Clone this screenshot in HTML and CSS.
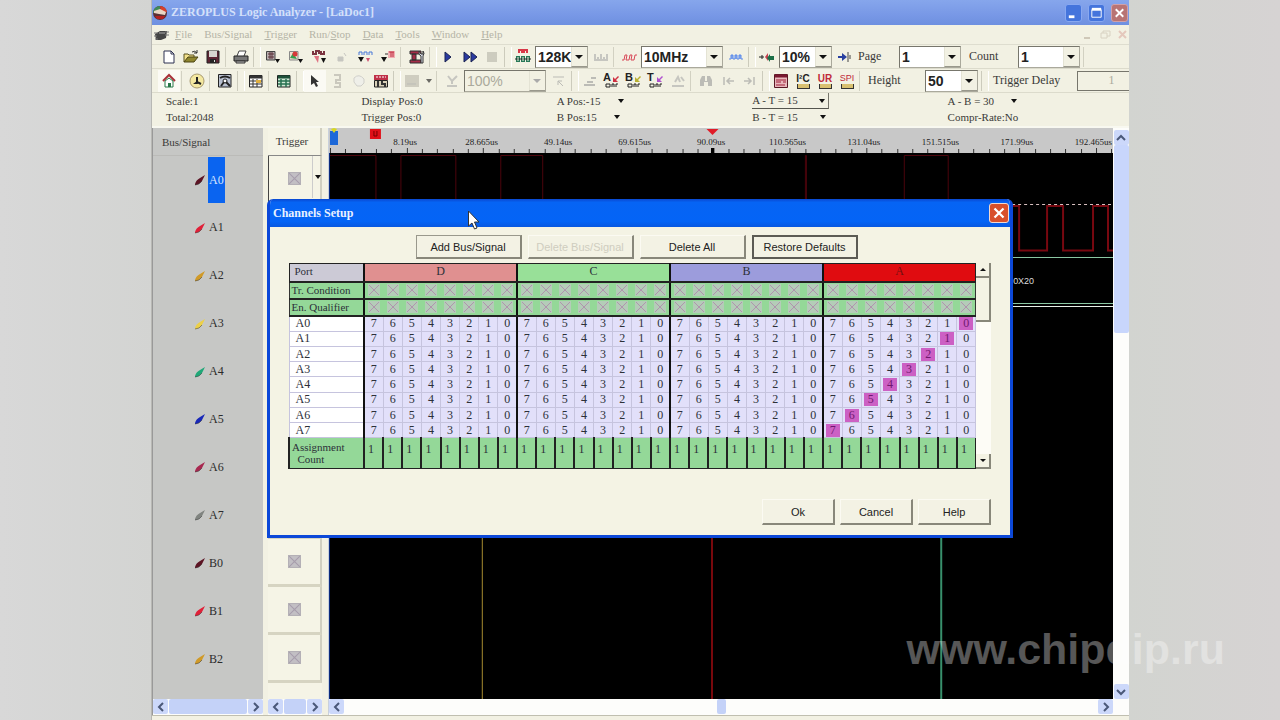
FILE: index.html
```html
<!DOCTYPE html>
<html lang="en">
<head>
<meta charset="utf-8">
<title>ZEROPLUS Logic Analyzer - [LaDoc1]</title>
<link rel="stylesheet" href="styles.css">
</head>
<body>
<svg class="defs" aria-hidden="true">
  <symbol id="cross" viewBox="0 0 12 12"><rect width="12" height="12" fill="#c2bfc4"/><path d="M1 1L11 11M11 1L1 11" stroke="#a79dac" fill="none"/><rect x=".5" y=".5" width="11" height="11" fill="none" stroke="#b4b0b6"/></symbol>
  <symbol id="cond" viewBox="0 0 12 12"><rect width="12" height="12" fill="#b4ccb8"/><path d="M1 1L11 11M11 1L1 11" stroke="#b094ae" fill="none"/></symbol>
  <symbol id="probe" viewBox="0 0 12 12"><path d="M1 10Q2 6 6 4L11 1L8 7Q5 11 1 11Z" fill="currentColor"/><path d="M1 11L5 10L8 7" stroke="#333" stroke-opacity=".5" fill="none"/></symbol>
  <symbol id="left" viewBox="0 0 10 10"><path d="M7 1L3 5L7 9" fill="none" stroke="#4a5878" stroke-width="2"/></symbol>
  <symbol id="right" viewBox="0 0 10 10"><path d="M3 1L7 5L3 9" fill="none" stroke="#4a5878" stroke-width="2"/></symbol>
  <symbol id="up" viewBox="0 0 10 10"><path d="M1 7L5 3L9 7" fill="none" stroke="#4a5878" stroke-width="2"/></symbol>
  <symbol id="down" viewBox="0 0 10 10"><path d="M1 3L5 7L9 3" fill="none" stroke="#4a5878" stroke-width="2"/></symbol>
</svg>
<main class="app">
  <header class="titlebar">
    <svg class="ico" viewBox="0 0 16 16"><circle cx="8" cy="8" r="7" fill="#5b2f33"/><path d="M1 8A7 7 0 0 1 8 1L9 7Z" fill="#3f8a5a"/><path d="M8 1A7 7 0 0 1 15 7L9 7Z" fill="#d8402c"/><path d="M2 6L8 4L14 7L13 10L7 9L2 8Z" fill="#e9d6c4"/><path d="M3 11L13 11L11 14L5 14Z" fill="#b32020"/></svg>
    <h1>ZEROPLUS Logic Analyzer - [LaDoc1]</h1>
    <button class="wb" aria-label="Minimize"><svg viewBox="0 0 16 16"><path d="M3 12H9" stroke="#fff" stroke-width="3"/></svg></button>
    <button class="wb" aria-label="Maximize"><svg viewBox="0 0 16 16"><path d="M3 4.500H13V12.500H3Z" stroke="#fff" fill="none"/><path d="M3 4H13" stroke="#fff" stroke-width="3"/></svg></button>
    <button class="wb close-dim" aria-label="Close"><svg viewBox="0 0 16 16"><path d="M4 4L12 12M12 4L4 12" stroke="#fff" stroke-width="2"/></svg></button>
  </header>
  <nav class="menubar">
    <svg class="ico" viewBox="0 0 16 16"><path d="M2 7L7 4H14L13 11L8 13H3Z" fill="#444"/><path d="M1 6H5M1 9H4M2 12H5M12 5H16M12 8H16" stroke="#777" /><path d="M6 6H12" stroke="#aaa"/></svg>
    <a href="#"><u>F</u>ile</a><a href="#">Bus/Signal</a><a href="#"><u>T</u>rigger</a><a href="#">Run/<u>S</u>top</a><a href="#"><u>D</u>ata</a><a href="#"><u>T</u>ools</a><a href="#"><u>W</u>indow</a><a href="#"><u>H</u>elp</a>
    <svg class="mdi" viewBox="0 0 48 12"><path d="M3 9H9" stroke="#cfc8b8" stroke-width="2"/><path d="M20 4H26V9H20ZM22 4V2H29V7H26" fill="none" stroke="#d8d2c2"/><path d="M38 2L45 9M45 2L38 9" stroke="#e4c8bc" stroke-width="2"/></svg>
  </nav>
  <div class="toolbar">
    <button class="tb" aria-label="New"><svg viewBox="0 0 16 16"><path d="M3 2H10L13 5V14H3Z" fill="#fff" stroke="#2d3050"/><path d="M10 2V5H13" fill="none" stroke="#2d3050"/></svg></button>
    <button class="tb" aria-label="Open"><svg viewBox="0 0 16 16"><path d="M1 13V5H5L6 6H11V8" fill="#f2e08a" stroke="#5a5320"/><path d="M1 13L5 8H15L11 13Z" fill="#8f862e" stroke="#4a4415"/><path d="M9 3Q12 1 14 4M14 1V4H11" fill="none" stroke="#333"/></svg></button>
    <button class="tb" aria-label="Save"><svg viewBox="0 0 16 16"><path d="M2 2H14V14H2Z" fill="#5c2433" stroke="#222"/><path d="M4 2H12V8H4Z" fill="#d7d5d0"/><path d="M5 10H11V14H5Z" fill="#222"/><path d="M9 11H10V13H9Z" fill="#ddd"/></svg></button>
    <i class="sep"></i>
    <button class="tb" aria-label="Print"><svg viewBox="0 0 16 16"><path d="M4 7L6 2H13L11 7" fill="#fff" stroke="#444"/><path d="M1 7H15V12H1Z" fill="#777" stroke="#222"/><path d="M3 12H12V14H3Z" fill="#bbb" stroke="#333"/></svg></button>
    <i class="sep wide"></i>
    <button class="tb mid" aria-label="Sampling setup"><svg viewBox="0 0 16 16"><path d="M1.500 2.500H10V11H1.500Z" fill="#b8aeb0" stroke="#444"/><path d="M3 5H9M3 8H9M5 3V10M7 3V10" stroke="#5a3038"/><path d="M10 10H15L12.500 14Z" fill="#111"/></svg></button>
    <button class="tb mid" aria-label="Channels setup"><svg viewBox="0 0 16 16"><path d="M1.500 2.500H10V11H1.500Z" fill="#f0ded0" stroke="#888"/><path d="M2 9L5 4L9 10Z" fill="#35a050"/><circle cx="7" cy="5" r="2.500" fill="#d83838"/><path d="M10 10H15L12.500 14Z" fill="#111"/></svg></button>
    <button class="tb mid" aria-label="Trigger setup"><svg viewBox="0 0 16 16"><path d="M2 2V5H5V2H8V5M10 2V5H13V2" fill="none" stroke="#7c3440" stroke-width="2"/><path d="M3 7L7 14L8 7Z" fill="#e07080"/><path d="M10 9H15L12.500 14Z" fill="#111"/></svg></button>
    <button class="tb mid dim" aria-label="Trigger option"><svg viewBox="0 0 16 16"><path d="M4 8H9V12H4ZM10 4L12 7" fill="#aaa" stroke="#aaa"/></svg></button>
    <button class="tb mid" aria-label="Trigger mark"><svg viewBox="0 0 16 16"><path d="M2 6V3H5V6M7 6V3H10V6M12 6V3H15V6" fill="none" stroke="#4878d8"/><path d="M1 8H7L4 13Z" fill="#111"/><path d="M9 9H13L11 13Z" fill="#d05070"/></svg></button>
    <button class="tb mid" aria-label="Width trigger"><svg viewBox="0 0 16 16"><path d="M8 2H15V9H8Z" fill="#f0b0b4"/><path d="M9 3H14M11 3V8M13 3V8" stroke="#c02c40"/><path d="M1 8H7L4 13Z" fill="#111"/><path d="M5 5H8" stroke="#333"/></svg></button>
    <i class="sep"></i>
    <button class="tb mid" aria-label="Bus tools"><svg viewBox="0 0 16 16"><path d="M1 2H12V5H1ZM1 11H12V14H1ZM3 5H7V11H3Z" fill="#a52c48" stroke="#333"/><path d="M10 2Q9 6 12 7V14H14V7Q16 4 14 2V5H12Z" fill="#dfe3ee" stroke="#333"/></svg></button>
    <i class="sep wide"></i>
    <button class="tb" aria-label="Run"><svg viewBox="0 0 16 16"><path d="M5 3L11 8L5 13Z" fill="#2a3aa0" stroke="#1a2350"/></svg></button>
    <button class="tb" aria-label="Repeat run"><svg viewBox="0 0 16 16"><path d="M2 3L8 8L2 13ZM9 3L15 8L9 13Z" fill="#2a3aa0" stroke="#1a2350"/></svg></button>
    <button class="tb dim" aria-label="Stop"><svg viewBox="0 0 16 16"><path d="M3 3H13V13H3Z" fill="#b5b4a8"/></svg></button>
    <i class="sep wide"></i>
    <button class="tb" aria-label="RAM size"><svg viewBox="0 0 16 16"><path d="M4 4V1H7V4M9 4V1H12V4" fill="none" stroke="#d83848" stroke-width="2"/><path d="M1 7H5V13H1ZM6 7H10V13H6ZM11 7H15V13H11Z" fill="#287858"/><path d="M0 10H16" stroke="#222"/><path d="M3 8V12M8 8V12M13 8V12" stroke="#f0efe0"/></svg></button>
    <label class="combo"><select aria-label="RAM size"><option>128K</option></select></label>
    <button class="tb dim" aria-label="Memory"><svg viewBox="0 0 16 16"><path d="M2 5V12M5 8V12M8 5V12M11 8V12M14 5V12M1 11H15" stroke="#aaa" stroke-width="2"/></svg></button>
    <i class="sep"></i>
    <button class="tb" aria-label="Frequency"><svg viewBox="0 0 16 16"><path d="M1 11H3L4 6H6L5 11H8L9 6H11L10 11H13L14 6H16" fill="none" stroke="#d84858"/></svg></button>
    <label class="combo long"><select aria-label="Frequency"><option>10MHz</option></select></label>
    <button class="tb" aria-label="External clock"><svg viewBox="0 0 16 16"><path d="M1 10H3V6H5V10H7V6H9V10H11V6H13V10H15" fill="#90b0f0" stroke="#5888e8"/></svg></button>
    <i class="sep wide"></i>
    <button class="tb" aria-label="Trigger position"><svg viewBox="0 0 16 16"><path d="M0 8H5M3 6V10" stroke="#222"/><path d="M6 8L9 4V12Z" fill="#c84050"/><path d="M8 9L11 5V7H15V11H11V13Z" fill="#1c7048"/></svg></button>
    <label class="combo"><select aria-label="Trigger position"><option>10%</option></select></label>
    <button class="tb" aria-label="Trigger page"><svg viewBox="0 0 16 16"><path d="M1 7H5V4L10 8L5 12V9H1Z" fill="#2840a0"/><path d="M11 3V13M13 6V10" stroke="#444"/></svg></button>
    <label class="lab page" for="page">Page</label>
    <span class="combo count"><select id="page"><option>1</option></select></span>
    <label class="lab cnt" for="count">Count</label>
    <span class="combo count"><select id="count"><option>1</option></select></span>
    <i class="sep"></i>
  </div>
  <div class="toolbar">
    <button class="tb on" aria-label="Home"><svg viewBox="0 0 16 16"><path d="M2 8L8 2L14 8" fill="none" stroke="#a83038" stroke-width="2"/><path d="M4 8V14H12V8L8 5Z" fill="#fff" stroke="#287848"/><path d="M7 10H10V14H7Z" fill="#287848"/></svg></button>
    <i class="sep"></i>
    <button class="tb" aria-label="Statistics"><svg viewBox="0 0 16 16"><circle cx="8" cy="8" r="7" fill="#f4e8a0" stroke="#a89a70"/><path d="M8 4V9L12 11" stroke="#222" stroke-width="2" fill="none"/><path d="M8 8L4 11H9Z" fill="#222"/></svg></button>
    <i class="sep"></i>
    <button class="tb" aria-label="Navigator"><svg viewBox="0 0 16 16"><path d="M1.500 1.500H14V14H1.500Z" fill="#b8c0d0" stroke="#222"/><path d="M3 5Q8 2 13 5" fill="none" stroke="#222" stroke-width="2"/><circle cx="8" cy="8" r="2" fill="#fff" stroke="#222"/><path d="M4 13L7 9M13 13L9 9" stroke="#222" stroke-width="2"/></svg></button>
    <i class="sep wide"></i>
    <button class="tb" aria-label="Waveform view"><svg viewBox="0 0 16 16"><path d="M1.500 2.500H14V14H1.500Z" fill="#fff" stroke="#222"/><path d="M2 4H14" stroke="#333" stroke-width="3"/><path d="M2 8H14M2 11H14M5 6V14M9 6V14" stroke="#333"/><path d="M8 7H13V10H8Z" fill="#e0b040"/></svg></button>
    <i class="sep"></i>
    <button class="tb" aria-label="List view"><svg viewBox="0 0 16 16"><path d="M1.500 2.500H14V14H1.500Z" fill="#cfe8d4" stroke="#222"/><path d="M2 4H14" stroke="#1d5038" stroke-width="3"/><path d="M2 8H14M2 11H14M5 6V14M10 6V14" stroke="#287050" stroke-width="1.500"/></svg></button>
    <i class="sep wide"></i>
    <button class="tb on" aria-label="Pointer"><svg viewBox="0 0 16 16"><path d="M4 2V12L7 10L9 14L11 13L9 9H12Z" fill="#333"/></svg></button>
    <button class="tb dim" aria-label="Zoom"><svg viewBox="0 0 16 16"><path d="M5 2H11V7H7V10H11V14H5" fill="none" stroke="#b0aea4" stroke-width="2"/></svg></button>
    <button class="tb dim" aria-label="Hand"><svg viewBox="0 0 16 16"><path d="M3 9V5Q8 0 13 6V10L10 13H6Z" fill="#eee" stroke="#bbb"/></svg></button>
    <button class="tb" aria-label="Normal"><svg viewBox="0 0 16 16"><path d="M1 2H15V7H1Z" fill="#c03048"/><path d="M3 4H13" stroke="#fff" stroke-dasharray="2 1"/><path d="M1.500 7.500H14.500V14H1.500Z" fill="#d8d0b8" stroke="#222"/><path d="M5 8V14M9 8V11H12V14" fill="none" stroke="#333" stroke-width="2"/></svg></button>
    <i class="sep wide"></i>
    <button class="tb dim" aria-label="Color"><svg viewBox="0 0 16 16"><path d="M1 2H15V14H1Z" fill="#b8b6aa"/><path d="M3 11H12" stroke="#999"/></svg></button>
    <button class="drop dim" aria-label="Color options"></button>
    <i class="sep"></i>
    <button class="tb dim" aria-label="Zoom out"><svg viewBox="0 0 16 16"><path d="M4 3L8 8L13 3M8 8V11M3 13H13" fill="none" stroke="#aaa" stroke-width="2"/></svg></button>
    <label class="combo long off"><select aria-label="Zoom" disabled><option>100%</option></select></label>
    <button class="tb dim" aria-label="Data zoom"><svg viewBox="0 0 16 16"><path d="M2 4H13M7 8L12 13M7 8V12M7 8H11" stroke="#999"/></svg></button>
    <i class="sep wide"></i>
    <button class="tb dim" aria-label="Add bar"><svg viewBox="0 0 16 16"><path d="M2 12H13M5 9H11M9 5H14" stroke="#999" stroke-width="2"/></svg></button>
    <button class="tb bar" aria-label="A bar"><b>A</b><svg viewBox="0 0 16 16"><path d="M9 9V4L11 6L14 3L15 4L12 7L14 9Z" fill="#d03040"/><path d="M2 11H6V14H2ZM8 14V11H10V14M12 14V11H14" fill="none" stroke="#222"/></svg></button>
    <button class="tb bar" aria-label="B bar"><b>B</b><svg viewBox="0 0 16 16"><path d="M9 9V4L11 6L14 3L15 4L12 7L14 9Z" fill="#b8b030"/><path d="M2 11H6V14H2ZM8 14V11H10V14M12 14V11H14" fill="none" stroke="#222"/></svg></button>
    <button class="tb bar" aria-label="T bar"><b>T</b><svg viewBox="0 0 16 16"><path d="M9 9V4L11 6L14 3L15 4L12 7L14 9Z" fill="#b050d0"/><path d="M2 11H6V14H2ZM8 14V11H10V14M12 14V11H14" fill="none" stroke="#222"/></svg></button>
    <button class="tb dim" aria-label="Delete bar"><svg viewBox="0 0 16 16"><path d="M2 13H14M5 9L8 4L10 9M11 4L14 8" fill="none" stroke="#aaa" stroke-width="2"/></svg></button>
    <i class="sep"></i>
    <button class="tb dim" aria-label="Find"><svg viewBox="0 0 16 16"><path d="M2 13V7L4 3H7V8H9V3H12L14 7V13H10V9H6V13Z" fill="#999"/></svg></button>
    <button class="tb dim" aria-label="Previous edge"><svg viewBox="0 0 16 16"><path d="M4 4V12M14 8H7M10 5L7 8L10 11" fill="none" stroke="#999" stroke-width="1.500"/></svg></button>
    <button class="tb dim" aria-label="Next edge"><svg viewBox="0 0 16 16"><path d="M12 4V12M2 8H9M6 5L9 8L6 11" fill="none" stroke="#999" stroke-width="1.500"/></svg></button>
    <i class="sep wide"></i>
    <button class="tb" aria-label="Bus property"><svg viewBox="0 0 16 16"><path d="M1.500 1.500H14.500V14.500H1.500Z" fill="#e8b8bc" stroke="#5a1824"/><path d="M2 3H14" stroke="#7a1830" stroke-width="3"/><path d="M3 7H13M3 9H8M10 9H13M3 12H12" stroke="#a02038"/></svg></button>
    <button class="tb bus ink" aria-label="I2C bus"><b>I²C</b><i></i></button>
    <button class="tb bus" aria-label="UART bus"><b>UR</b><i></i></button>
    <button class="tb bus thin" aria-label="SPI bus"><b>SPI</b><i></i></button>
    <i class="sep"></i>
    <label class="lab height" for="height">Height</label>
    <span class="combo"><select id="height"><option>50</option></select></span>
    <i class="sep wide"></i>
    <label class="lab delay" for="delay">Trigger Delay</label>
    <input id="delay" class="delay-box" value="1" disabled>
  </div>
  <section class="info">
    <div><p>Scale:1</p><p>Total:2048</p></div>
    <div><p>Display Pos:0</p><p>Trigger Pos:0</p></div>
    <div><p>A Pos:-15<button class="drop" aria-label="A position"></button></p><p>B Pos:15<button class="drop" aria-label="B position"></button></p></div>
    <div><p class="boxed">A - T = 15<button class="drop" aria-label="A minus T"></button></p><p class="pair">B - T = 15<button class="drop" aria-label="B minus T"></button></p></div>
    <div><p>A - B = 30<button class="drop" aria-label="A minus B"></button></p><p>Compr-Rate:No</p></div>
  </section>
  <section class="work">
    <div class="signals">
      <h2>Bus/Signal</h2>
      <ul class="rows">
        <li class="p0"><svg><use href="#probe"/></svg><span class="sel">A0</span></li>
        <li class="p1"><svg><use href="#probe"/></svg><span>A1</span></li>
        <li class="p2"><svg><use href="#probe"/></svg><span>A2</span></li>
        <li class="p3"><svg><use href="#probe"/></svg><span>A3</span></li>
        <li class="p4"><svg><use href="#probe"/></svg><span>A4</span></li>
        <li class="p5"><svg><use href="#probe"/></svg><span>A5</span></li>
        <li class="p6"><svg><use href="#probe"/></svg><span>A6</span></li>
        <li class="p7"><svg><use href="#probe"/></svg><span>A7</span></li>
        <li class="p0"><svg><use href="#probe"/></svg><span>B0</span></li>
        <li class="p1"><svg><use href="#probe"/></svg><span>B1</span></li>
        <li class="p2"><svg><use href="#probe"/></svg><span>B2</span></li>
      </ul>
      <div class="hscroll"><button aria-label="Scroll left"><svg><use href="#left"/></svg></button><i class="thumb"></i><button aria-label="Scroll right"><svg><use href="#right"/></svg></button></div>
    </div>
    <div class="triggers">
      <h2>Trigger</h2>
      <ul class="rows">
        <li class="cur"><svg><use href="#cross"/></svg><button class="drop" aria-label="Trigger condition"></button></li>
        <li></li><li></li><li></li><li></li><li></li><li></li><li></li>
        <li><svg><use href="#cross"/></svg></li><li><svg><use href="#cross"/></svg></li><li><svg><use href="#cross"/></svg></li>
      </ul>
      <div class="hscroll"><button aria-label="Scroll left"><svg><use href="#left"/></svg></button><i class="thumb"></i><button aria-label="Scroll right"><svg><use href="#right"/></svg></button></div>
    </div>
    <div class="waves">
      <div class="ruler">
        <svg class="ticks" viewBox="0 0 785 25" preserveAspectRatio="none"><path id="ticks" stroke="#333" d=""/><path d="M384 20V25" stroke="#000" stroke-width="3"/><path d="M378 1H390L384 7Z" fill="#e01c28"/><path d="M41 1H52V11H41Z" fill="#e01018"/><path d="M45 3V8H48V3" fill="none" stroke="#700"/><path d="M1 3H9V17H1Z" fill="#1c68d8"/><path d="M2 1L5 0L8 1L5 5Z" fill="#d8d820"/></svg>
        <span>8.19us</span><span>28.665us</span><span>49.14us</span><span>69.615us</span><span>90.09us</span><span>110.565us</span><span>131.04us</span><span>151.515us</span><span>171.99us</span><span>192.465us</span>
      </div>
      <svg class="plot" viewBox="0 0 785 546" preserveAspectRatio="none">
        <rect width="785" height="546" fill="#000"/>
        <path d="M1 2.500H47V50H72V2.500H127V50H172V2.500H214V50H477V2.500H478V50H576V2.500H620V50" fill="none" stroke="#4c040c"/>
        <path d="M684 51.500H785" stroke="#d8c0c0" stroke-dasharray="3 3"/>
        <path d="M684 53H691V97.500H719V53H735V97.500H765V53H780V97.500H785" fill="none" stroke="#780810" stroke-width="2"/>
        <path d="M684 104.500H785M684 150.500H785" stroke="#8cc8a4"/><path d="M684 153.500H785" stroke="#e8f0e8"/>
        <path d="M153.500 380V546" stroke="#a88c30"/><path d="M383.500 380V546" stroke="#78080c" stroke-width="2"/><path d="M613 380V546" stroke="#38906c" stroke-width="2"/>
        <path d="M.5 0V546" stroke="#0c2c80"/>
        <text x="685" y="131" class="bus-value">0X20</text>
      </svg>
      <div class="hscroll"><button aria-label="Scroll left"><svg><use href="#left"/></svg></button><i class="thumb"></i><button aria-label="Scroll right"><svg><use href="#right"/></svg></button></div>
    </div>
    <div class="vscroll"><button aria-label="Scroll up"><svg><use href="#up"/></svg></button><i class="thumb"></i><button aria-label="Scroll down"><svg><use href="#down"/></svg></button></div>
  </section>
  <footer class="status"></footer>
</main>
<section class="dialog" role="dialog" aria-labelledby="dlg">
  <header><h2 id="dlg">Channels Setup</h2><button class="x" aria-label="Close"><svg viewBox="0 0 16 16"><path d="M4 4L12 12M12 4L4 12" stroke="#fff" stroke-width="2"/></svg></button></header>
  <div class="body">
    <div class="actions"><button class="btn">Add Bus/Signal</button><button class="btn" disabled>Delete Bus/Signal</button><button class="btn">Delete All</button><button class="btn default">Restore Defaults</button></div>
    <div class="sheet">
      <table>
        <colgroup><col class="name"><col span="32"></colgroup>
        <thead><tr><th>Port</th><th class="pd" colspan="8">D</th><th class="pc" colspan="8">C</th><th class="pb" colspan="8">B</th><th class="pa" colspan="8">A</th></tr></thead>
        <tbody id="channels"></tbody>
      </table>
      <div class="sbar"><button class="u" aria-label="Scroll up"></button><i></i><button class="d" aria-label="Scroll down"></button></div>
    </div>
    <div class="confirm"><button class="btn">Ok</button><button class="btn">Cancel</button><button class="btn">Help</button></div>
  </div>
</section>
<svg class="cursor" viewBox="0 0 12 20"><path d="M1 1V16L4.500 13L7 19L9.500 18L7 12H11.500Z" fill="#fff" stroke="#333"/></svg>
<div class="watermark">www.chipdip.ru</div>
<script src="script.js"></script>
</body>
</html>
```
FILE: styles.css
```css
* { box-sizing: border-box; }
body { margin: 0; height: 100vh; overflow: hidden; position: relative; padding: 0 151px; background: linear-gradient(90deg, #d8d8d8, #d3d4d2 12%, #d2d4d0 88%, #d6d3d3); font: 11px/15px "Liberation Serif", serif; color: #3a3a38; }
h1, h2, p, ul { margin: 0; padding: 0; font-size: inherit; font-weight: normal; list-style: none; }
button { padding: 0; border: 0; background: none; color: inherit; font: inherit; }
.defs { position: absolute; width: 0; height: 0; }
.app { height: 100%; display: flex; flex-direction: column; background: #f2f1e3; border-left: 1px solid #b8b8b4; overflow: hidden; }
.ico { width: 16px; height: 16px; flex: none; }

.titlebar { height: 25px; flex: none; display: flex; align-items: center; gap: 2px; background: linear-gradient(#86a6ec, #7898e6 60%, #6e90e0); color: #d4e0fa; }
.titlebar h1 { flex: 1; font-size: 12px; font-weight: bold; padding-left: 1px; }
.wb { width: 17px; height: 18px; margin-right: 4px; border: 1px solid #88a8f0; border-radius: 3px; background: #4474dc; }
.wb svg { display: block; width: 15px; height: 16px; }
.close-dim { background: #b87474; border-color: #d0a0a8; margin-right: 1px; }

.menubar { height: 20px; flex: none; display: flex; align-items: center; gap: 12px; padding-left: 1px; color: #b5b4a6; border-bottom: 1px solid #deddcf; }
.menubar .ico { margin-right: -6px; }
.menubar a { color: inherit; text-decoration: none; }
.mdi { width: 48px; height: 12px; margin-left: auto; }

.toolbar { height: 24px; flex: none; display: flex; align-items: center; padding-left: 6px; border-bottom: 1px solid #dcdbcc; overflow: hidden; }
.tb { width: 22px; height: 22px; flex: none; position: relative; display: flex; align-items: center; justify-content: center; }
.tb svg { width: 16px; height: 16px; }
.mid { width: 23px; }
.dim { opacity: .6; }
.on { background: #fbfaf4; }
.sep { width: 5px; height: 20px; flex: none; border-left: 1px solid #d2d1c2; margin-left: 1px; }
.sep.wide { width: 8px; border-right: 1px solid #fff; border-left-color: #cccbbc; }
.bar b { position: absolute; left: 2px; top: 2px; font: bold 11px/11px "Liberation Sans", sans-serif; color: #222; }
.bus { flex-direction: column; color: #c02838; }
.bus b { font: bold 10px/11px "Liberation Sans", sans-serif; }
.bus i { width: 13px; height: 5px; border: 1px solid #333; border-top: 0; background: #d8c070; }
.ink b { color: #222; }
.thin b { font-weight: normal; font-size: 9px; }
.combo { position: relative; flex: none; width: 53px; height: 22px; margin: 0 2px 0 1px; background: #fff; border: 1px solid #77766c; border-right-color: #aaa99c; border-bottom-color: #aaa99c; }
.combo::after { content: ""; position: absolute; right: 4px; top: 8px; border: 4px solid transparent; border-top-color: #111; border-bottom: 0; }
.combo::before { content: ""; position: absolute; right: 0; top: 0; bottom: 0; width: 15px; background: #f2f1e3; border-left: 1px solid #e4e3d4; border-bottom: 1px solid #99988c; }
.combo select { appearance: none; width: 100%; height: 100%; border: 0; padding: 0 2px; background: none; font: bold 14px/20px "Liberation Sans", sans-serif; color: #222; }
.combo.long { width: 82px; }
.combo.count { width: 62px; }
.off { background: #f2f1e3; }
.off select { font-weight: normal; color: #aaa99c; opacity: 1; }
.off::after { border-top-color: #aaa; }
.lab { flex: none; font-size: 12px; }
.page { width: 42px; padding-left: 2px; }
.cnt { width: 54px; padding-left: 6px; }
.height { width: 60px; padding-left: 4px; }
.delay { width: 88px; padding-left: 4px; }
.delay-box { flex: 1; min-width: 0; height: 20px; border: 1px solid #77766c; border-right: 0; background: #f2f1e3; text-align: center; color: #aaa99c; font: 12px "Liberation Serif", serif; padding: 0 0 0 16px; }
.drop { width: 12px; height: 12px; display: inline-flex; align-items: center; justify-content: center; }
.drop::after { content: ""; border: 3px solid transparent; border-top: 4px solid #111; border-bottom: 0; }

.info { height: 35px; flex: none; display: grid; grid-template-columns: repeat(5, 20%); align-items: start; font-size: 11px; border-bottom: 2px solid #f8f8f0; }
.info div { padding-left: 14px; }
.info p { display: flex; align-items: center; gap: 14px; height: 16px; width: max-content; }
.info .boxed, .info .pair { width: 77px; justify-content: space-between; gap: 0; }
.info .boxed { border-bottom: 1px solid #55554e; border-right: 1px solid #77766c; }

.work { flex: 1; min-height: 0; display: flex; }
.signals, .triggers, .waves { display: flex; flex-direction: column; min-width: 0; }
.signals { width: 111px; margin-right: 5px; background: #c6c7c5; border-left: 1px solid #999; }
.signals h2 { height: 28px; flex: none; padding: 7px 0 0 9px; border-bottom: 1px solid #bbbbb8; }
.rows { flex: 1; min-height: 0; display: flex; flex-direction: column; padding-bottom: 16px; }
.rows li { flex: 1; min-height: 0; display: flex; align-items: center; }
.signals li { padding-left: 41px; gap: 2px; font-size: 12px; color: #2c2c2c; }
.signals li svg { width: 12px; height: 12px; color: var(--c); }
.signals li span { padding: 0 1px; }
.signals li .sel { background: #0a64f0; color: #d8e6ff; line-height: 46px; }
.p0 { --c: #5c1424; }
.p1 { --c: #e02038; }
.p2 { --c: #d09a28; }
.p3 { --c: #ecd048; }
.p4 { --c: #20a878; }
.p5 { --c: #1828b8; }
.p6 { --c: #a82850; }
.p7 { --c: #808480; }
.triggers { width: 54px; margin-right: 6px; background: #f5f4e6; }
.triggers h2 { height: 28px; flex: none; padding-top: 6px; text-align: center; border-right: 2px solid #d0cfc0; border-bottom: 1px solid #888; padding-right: 4px; }
.triggers li { justify-content: center; border-bottom: 3px solid #d6d4c2; border-right: 2px solid #d0cfc0; position: relative; }
.triggers li svg { width: 13px; height: 13px; }
.triggers li.cur { border-left: 1px solid #444; }
.triggers .drop { position: absolute; right: -2px; top: 0; bottom: 3px; height: auto; width: 10px; border-left: 1px solid #ccc; }
.waves { flex: 1; border-left: 1px solid #c8d0dc; }
.ruler { height: 25px; flex: none; position: relative; display: flex; padding-left: 38px; background: #c8c8c8; overflow: hidden; font-size: 9px; color: #222; }
.ruler span { flex: 0 0 10.25%; text-align: center; padding-top: 7px; line-height: 14px; }
.ticks { position: absolute; left: 0; top: 0; width: 100%; height: 100%; }
.plot { flex: 1; min-height: 0; width: 100%; display: block; }
.bus-value { font: 9px "Liberation Sans", sans-serif; fill: #ddd; }
.hscroll { height: 16px; flex: none; display: flex; background: #fdfdfb; }
.hscroll button, .vscroll button { width: 15px; height: 15px; flex: none; display: flex; align-items: center; justify-content: center; background: #ccd8fa; border-radius: 2px; }
.hscroll button svg, .vscroll button svg { width: 10px; height: 10px; }
.hscroll .thumb { flex: 1; margin: 0 1px 1px; background: #c4d2f8; border-radius: 2px; }
.waves .hscroll { justify-content: space-between; }
.waves .thumb { flex: 0 0 9px; }
.vscroll { width: 16px; display: flex; flex-direction: column; align-items: center; background: #fdfdfb; padding: 2px 0 16px; }
.vscroll .thumb { width: 15px; height: 33%; background: #c8d6fc; border-radius: 2px; margin-bottom: auto; }
.status { height: 5px; flex: none; border-top: 1px solid #c0bfb0; }

.dialog { position: absolute; left: 267px; right: 267px; top: 199px; display: flex; flex-direction: column; border: 3px solid #0c48d8; border-top: 0; border-radius: 6px 6px 0 0; background: #f4f3e4; overflow: hidden; }
.dialog header { height: 28px; display: flex; align-items: center; justify-content: space-between; padding: 0 1px 0 3px; background: linear-gradient(#0a48d0, #0664f4 12%, #0464f6 80%, #0858e0); color: #eaf2ff; font-size: 12px; font-weight: bold; }
.dialog h2 { font-weight: bold; }
.x { width: 20px; height: 20px; border: 1px solid #f0d8d0; border-radius: 3px; background: #d8502c; }
.x svg { display: block; width: 18px; height: 18px; }
.body { padding: 8px 19px 10px 18px; }
.actions { display: flex; justify-content: center; gap: 6px; padding-right: 6px; }
.btn { height: 24px; border: 1px solid #fbfaf2; border-right: 2px solid #88877a; border-bottom: 2px solid #88877a; background: #f3f2e4; font: 11px "Liberation Sans", sans-serif; color: #222; }
.actions .btn { width: 106px; }
.actions .btn:first-child { border-top-color: #99988c; border-left-color: #99988c; }
.btn:disabled { color: #cfcdbf; }
.actions .default { border: 2px solid #5c5b54; }
.sheet { display: flex; margin-top: 4px; }
table { flex: 1; min-width: 0; height: 206px; table-layout: fixed; border-collapse: collapse; font-size: 12px; line-height: 13px; color: #2c3038; border: 1px solid #333; }
.name { width: 75px; }
td, th { padding: 0; text-align: center; font-weight: normal; border: 1px solid #c6c4de; background: #e2e0fa; overflow: hidden; vertical-align: middle; }
tr > :first-child { text-align: left; padding-left: 6px; background: #fff; }
thead th { height: 18px; border: 1px solid #222; border-bottom-width: 2px; vertical-align: top; line-height: 14px; }
thead th:first-child { background: #cccad6; padding-left: 5px; font-size: 11px; }
td.edge, thead th + th { border-left: 2px solid #111; }
thead .pd { background: #e09090; }
thead .pc { background: #98e098; }
thead .pb { background: #9c9cdc; }
thead .pa { background: #e00c10; color: #701010; }
.gate > * { height: 17px; background: #94d898; border: 0; border-bottom: 2px solid #222; }
.gate > :first-child, .total > :first-child { background: #94d898; padding-left: 2px; font-size: 11px; }
.gate svg { display: block; width: 12px; height: 12px; margin: 0 auto; }
.port > * { height: 15px; }
.hit { display: block; margin: 0 2px; background: #cc60c4; color: #701870; }
.total > * { height: 30px; background: #94d898; border: 1px solid #222; border-left-width: 2px; vertical-align: top; line-height: 12px; padding-top: 3px; }
.total > td { padding: 5px 5px 0 0; }
.sbar { width: 15px; display: flex; flex-direction: column; background: #fdfcf6; }
.sbar button { height: 15px; display: flex; align-items: center; justify-content: center; border-right: 2px solid #88877a; border-bottom: 2px solid #88877a; background: #f4f3e4; }
.sbar button::after { content: ""; border: 3px solid transparent; }
.sbar .u::after { border-bottom-color: #111; border-top: 0; }
.sbar .d::after { border-top-color: #111; border-bottom: 0; }
.sbar i { height: 44px; margin-bottom: auto; background: #f4f3e4; border-right: 2px solid #88877a; border-bottom: 2px solid #88877a; }
.confirm { display: flex; justify-content: flex-end; gap: 5px; margin-top: 30px; }
.confirm .btn { width: 73px; height: 26px; }

.cursor { position: absolute; left: 467px; top: 210px; width: 13px; height: 20px; }
.watermark { position: absolute; right: 55px; bottom: 48px; font: bold 43px/46px "Liberation Sans", sans-serif; color: rgba(255, 255, 255, .34); pointer-events: none; }
```
FILE: script.js
```js
const bits = [...Array(32).keys()].map(i => 7 - i % 8);
const edge = i => (i % 8 === 0 ? ' class="edge"' : '');
const gate = name => `<tr class="gate"><th scope="row">${name}</th>` +
  bits.map((b, i) => `<td${edge(i)}><svg><use href="#cond"/></svg></td>`).join('') + '</tr>';
const port = n => `<tr class="port"><th scope="row">A${n}</th>` +
  bits.map((b, i) => `<td${edge(i)}>${i > 23 && b === n ? `<span class="hit">${b}</span>` : b}</td>`).join('') + '</tr>';
const total = '<tr class="total"><th scope="row">Assignment<br>&nbsp; Count</th>' + bits.map(() => '<td>1</td>').join('') + '</tr>';
document.getElementById('channels').innerHTML =
  gate('Tr. Condition') + gate('En. Qualifier') + [0, 1, 2, 3, 4, 5, 6, 7].map(port).join('') + total;

let d = '';
for (let i = 0; i < 52; i++) d += `M${Math.round(1 + i * 15.34) + 0.5} ${i % 5 === 0 ? 20 : 21}V25`;
document.getElementById('ticks').setAttribute('d', d);
```
